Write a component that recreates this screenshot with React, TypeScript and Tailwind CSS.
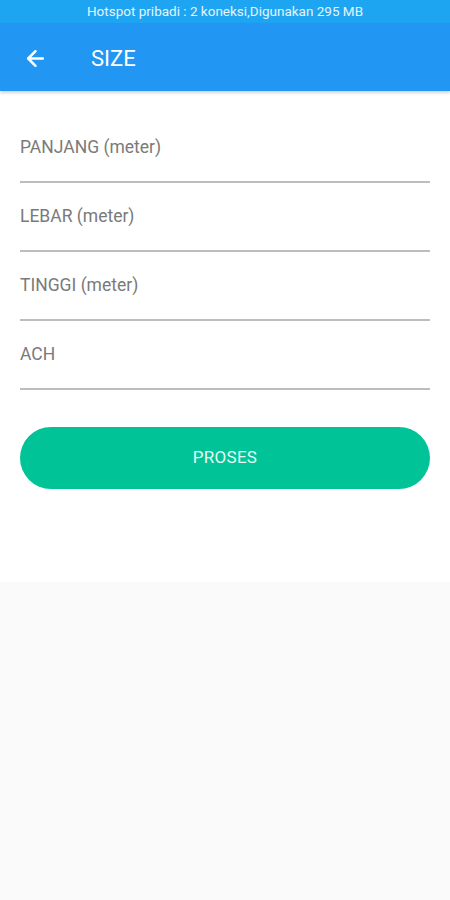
import { ArrowLeft } from 'lucide-react'

const fields = ['PANJANG (meter)', 'LEBAR (meter)', 'TINGGI (meter)', 'ACH']

export default function App() {
  return (
    <div className="min-h-screen bg-[#fafafa] font-['Roboto',sans-serif]">
      {/* status bar */}
      <div className="h-[23px] bg-[#1ea5f1] flex items-center justify-center">
        <span className="text-[13.5px] leading-none text-[#e3f4fd]">Hotspot pribadi : 2 koneksi,Digunakan 295 MB</span>
      </div>

      {/* app bar */}
      <div className="h-[68px] bg-[#2196f3] flex items-center pt-[2px] shadow-[0_2px_3px_rgba(0,0,0,0.18)] relative">
        <ArrowLeft className="ml-[23px] w-[25px] h-[25px] text-white" strokeWidth={2.4} />
        <span className="ml-[43px] text-[22px] font-normal text-white">SIZE</span>
      </div>

      {/* form */}
      <div className="bg-white h-[491px] px-5 pt-[23px]">
        {fields.map((f) => (
          <div key={f} className="h-[69px] flex flex-col justify-between">
            <div className="pt-[21px] text-[17.5px] leading-[24px] text-[#7a7a7a]">{f}</div>
            <div className="h-[2px] bg-[#bdbdbd]" />
          </div>
        ))}
        <button className="mt-[37px] w-full h-[62px] rounded-full bg-[#00c497] text-[#e6faf4] text-[17px] tracking-[0.3px]">
          PROSES
        </button>
      </div>
    </div>
  )
}
